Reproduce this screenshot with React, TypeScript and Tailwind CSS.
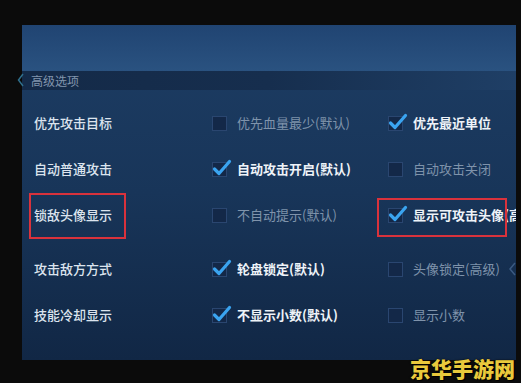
import React from 'react';

type Opt = { text: string; checked: boolean };
type Row = { label: string; a: Opt; b: Opt; gap?: boolean };

const rows: Row[] = [
  { label: '优先攻击目标', a: { text: '优先血量最少(默认)', checked: false }, b: { text: '优先最近单位', checked: true } },
  { label: '自动普通攻击', a: { text: '自动攻击开启(默认)', checked: true }, b: { text: '自动攻击关闭', checked: false } },
  { label: '锁敌头像显示', a: { text: '不自动提示(默认)', checked: false }, b: { text: '显示可攻击头像(高级)', checked: true } },
  { label: '攻击敌方方式', a: { text: '轮盘锁定(默认)', checked: true }, b: { text: '头像锁定(高级)', checked: false }, gap: true },
  { label: '技能冷却显示', a: { text: '不显示小数(默认)', checked: true }, b: { text: '显示小数', checked: false } },
];

const Check = ({ checked }: { checked: boolean }) => (
  <div className="relative w-[15px] h-[15px] shrink-0 bg-[#132848] border border-[#2a4670]">
    {checked && (
      <svg className="absolute -left-[1px] -top-[4px]" width="20" height="18" viewBox="0 0 20 18">
        <path d="M2.5 10 L7 14.5 L17.5 2.5" fill="none" stroke="#3aa4f0" strokeWidth="3.2" strokeLinecap="round" strokeLinejoin="round" />
      </svg>
    )}
  </div>
);

const Option = ({ opt }: { opt: Opt }) => (
  <div className="flex items-center gap-[10px] whitespace-nowrap">
    <Check checked={opt.checked} />
    <span className={`text-[13px] ${opt.checked ? 'text-[#eef3f8] font-bold' : 'text-[#7f93ab]'}`}>{opt.text}</span>
  </div>
);

export default function App() {
  return (
    <div
      className="w-[521px] h-[383px] bg-[#0b0b0b] relative overflow-hidden"
      style={{ fontFamily: '"Noto Sans CJK SC", "Noto Sans", sans-serif' }}
    >
      <div className="pt-[25px] pl-[22px] pr-[5px]">
        {/* panel */}
        <div className="relative h-[335px] overflow-hidden bg-gradient-to-b from-[#1d3d64] via-[#183559] to-[#112745]">
          {/* header */}
          <div className="h-[46px] bg-gradient-to-b from-[#204472] to-[#2a5280]" />
          {/* section bar */}
          <div className="h-[19px] flex items-center pl-[9px] bg-gradient-to-r from-[#142a48] via-[#162e4e] to-[#1f3f66]">
            <span className="text-[12px] text-[#8295ad]">高级选项</span>
          </div>

          <div className="pt-[10px]">
            {rows.map((r, i) => (
              <div
                key={i}
                className={`relative h-[46px] grid grid-cols-[178px_176px_1fr] items-center pl-[12px] ${r.gap ? 'mt-[8px]' : ''}`}
              >
                <span className="text-[13px] text-[#dce4ee] font-medium whitespace-nowrap">{r.label}</span>
                <Option opt={r.a} />
                <Option opt={r.b} />
                {i === 2 && (
                  <>
                    <div className="absolute left-[7px] top-[1px] w-[97px] h-[46px] border-2 border-[#d9323c]" />
                    <div className="absolute left-[355px] top-[6px] w-[130px] h-[39px] border-2 border-[#d9323c]" />
                  </>
                )}
                {r.gap && (
                  <svg className="absolute right-[0px] top-[16px]" width="8" height="14" viewBox="0 0 8 14">
                    <path d="M7 1 L2 7 L7 13" fill="none" stroke="#3b5a82" strokeWidth="1.5" />
                  </svg>
                )}
              </div>
            ))}
          </div>
        </div>
      </div>

      {/* left edge chevron */}
      <svg className="absolute left-[17px] top-[73px]" width="7" height="14" viewBox="0 0 7 14">
        <path d="M6 1 L1.5 7 L6 13" fill="none" stroke="#2f6f8c" strokeWidth="1.5" />
      </svg>

      {/* watermark */}
      <div className="absolute right-[6px] bottom-[4px] text-[21px] font-black text-[#e9c93c] tracking-[0px] leading-none"
        style={{ textShadow: '0 0 2px #000, 1px 1px 0 #000' }}>
        京华手游网
      </div>
    </div>
  );
}
